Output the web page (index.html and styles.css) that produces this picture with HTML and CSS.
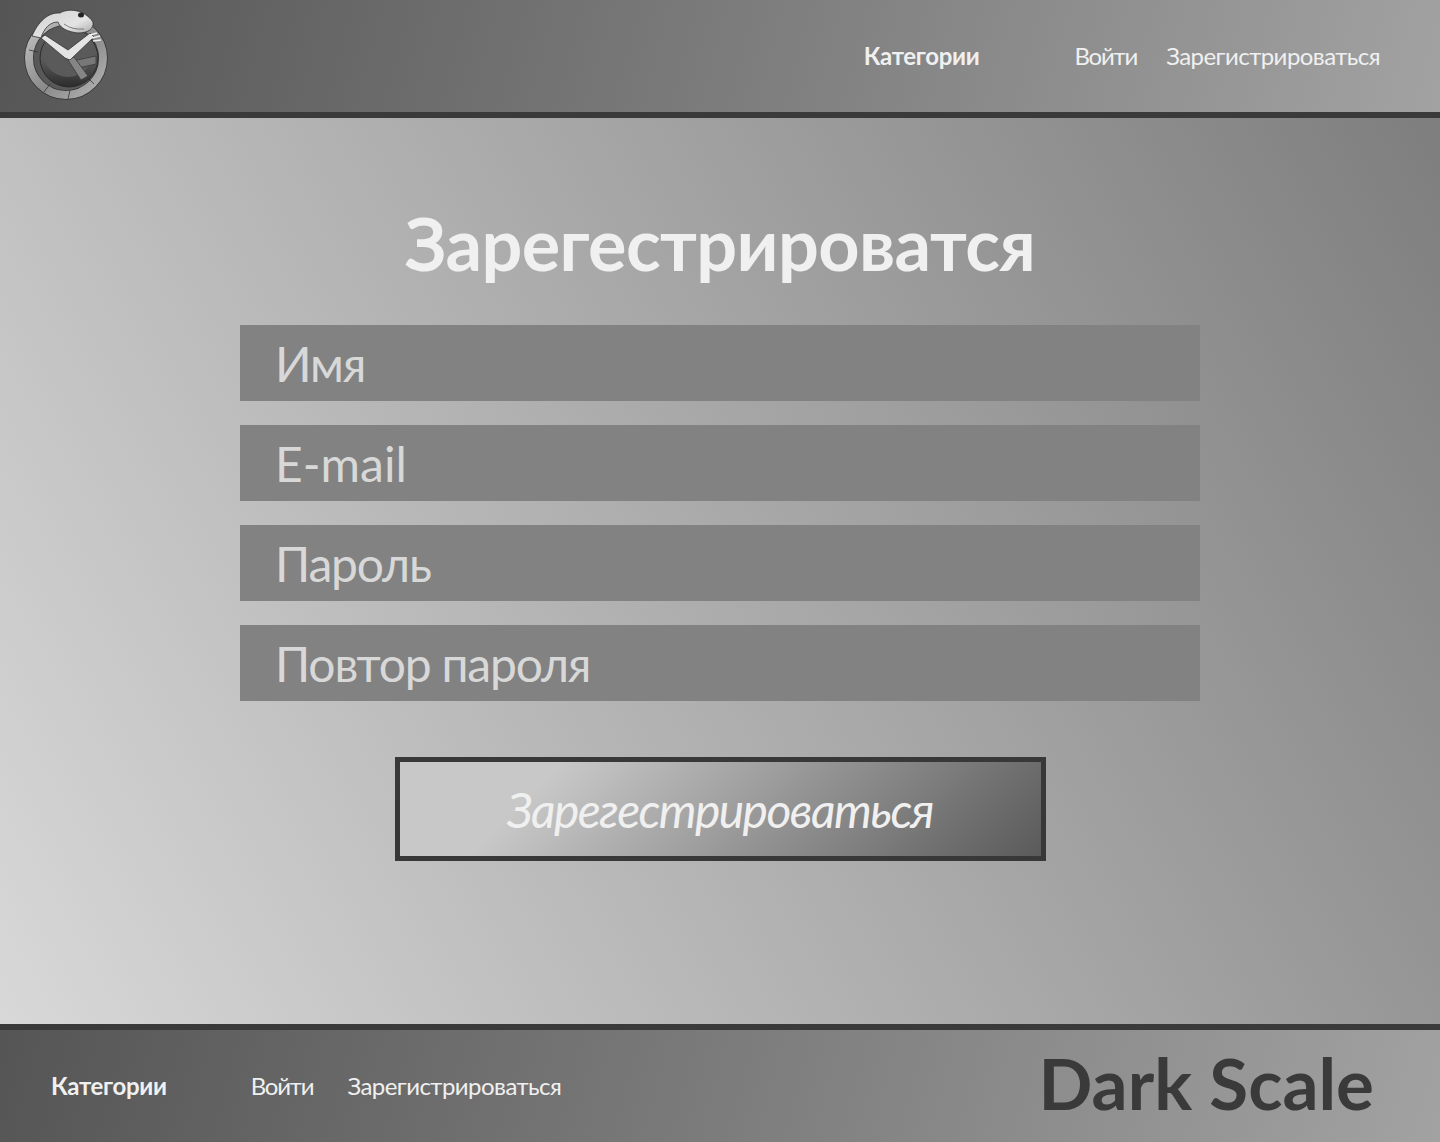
FILE: index.html
```html
<!DOCTYPE html>
<html lang="ru">
<head>
<meta charset="utf-8">
<title>Dark Scale</title>
<link rel="stylesheet" href="styles.css">
</head>
<body>
<header class="header">
  <svg class="logo" viewBox="22 8 90 96" width="90" height="96" aria-hidden="true">
    <defs>
      <linearGradient id="ring" x1="0" y1="0" x2="1" y2="1">
        <stop offset="0" stop-color="#c4c4c4"/><stop offset=".55" stop-color="#8a8a8a"/><stop offset="1" stop-color="#b4b4b4"/>
      </linearGradient>
      <linearGradient id="inner" x1="0" y1="0" x2="0" y2="1">
        <stop offset="0" stop-color="#5c5c5c"/><stop offset=".55" stop-color="#585858"/><stop offset="1" stop-color="#2c2c2c"/>
      </linearGradient>
      <linearGradient id="head" x1="0" y1="0" x2="1" y2="1">
        <stop offset="0" stop-color="#d0d0d0"/><stop offset=".6" stop-color="#e4e4e4"/><stop offset="1" stop-color="#9a9a9a"/>
      </linearGradient>
    </defs>
    <circle cx="66" cy="58" r="37" fill="none" stroke="#333" stroke-width="9.500"/>
    <circle cx="66" cy="58" r="37" fill="none" stroke="url(#ring)" stroke-width="8"/>
    <circle cx="69" cy="58" r="29" fill="url(#inner)" stroke="#2a2a2a"/>
    <circle cx="68" cy="52" r="25" fill="#5a5a5a"/>
    <path d="M72 61 L96 56 L96 64 L78 68 Z" fill="#777" stroke="#3a3a3a" stroke-width=".8"/>
    <path d="M68 60 L74 57 L88 76 L81 80 Z" fill="#858585" stroke="#3a3a3a" stroke-width=".8"/>
    <path d="M41 38 L45 35 L68 50 L90 33 L94 37 L70 60 L65 58 Z" fill="#e4e4e4" stroke="#333" stroke-width=".8"/>
    <path d="M32 36 C38 22 48 12 60 13 C68 8 84 9 93 22 C94 29 88 33 78 33 C68 32 60 28 58 22 C50 22 44 28 41 38 Z" fill="url(#head)" stroke="#333" stroke-width=".8"/>
    <ellipse cx="81" cy="15" rx="3" ry="2.500" fill="#222"/>
    <path d="M64 24 Q72 30 84 29" fill="none" stroke="#666" stroke-width=".8"/>
    <path d="M90 35 L97 33 M92 38 L100 36 M93 41 L101 40" stroke="#eee" stroke-width="1.500" fill="none"/>
    <path d="M29 50 L38 52 M44 92 L50 84 M68 99 L70 90 M94 84 L87 77" stroke="#333" stroke-width=".8"/>
  </svg>
  <nav class="nav nav-top">
    <a class="nav-strong">Категории</a>
    <a class="nav-login">Войти</a>
    <a class="nav-reg">Зарегистрироваться</a>
  </nav>
</header>
<main class="main">
  <h1 class="title">Зарегестрироватся</h1>
  <form class="form">
    <label class="field">Имя</label>
    <label class="field field-latin">E-mail</label>
    <label class="field">Пароль</label>
    <label class="field">Повтор пароля</label>
    <div class="submit">Зарегестрироваться</div>
  </form>
</main>
<footer class="footer">
  <nav class="nav nav-bottom">
    <a class="nav-strong">Категории</a>
    <a class="nav-login">Войти</a>
    <a class="nav-reg">Зарегистрироваться</a>
  </nav>
  <div class="brand">Dark Scale</div>
</footer>
</body>
</html>
```
FILE: styles.css
```css
* { box-sizing: border-box; }
html, body { margin: 0; }
body {
  width: 1440px;
  height: 1142px;
  display: flex;
  flex-direction: column;
  font-family: Lato, "Noto Sans", "Liberation Sans", sans-serif;
  color: #f0f0f0;
  overflow: hidden;
}
.header, .footer {
  display: flex;
  align-items: center;
  background: linear-gradient(105deg, #555 0%, #a2a2a2 100%);
}
.header {
  height: 118px;
  border-bottom: 6px solid #3a3a3a;
  justify-content: space-between;
  padding: 0 60px 0 22px;
}
.logo { display: block; }
.nav { display: flex; font-size: 24px; padding-bottom: 2px; }
.nav-strong { font-weight: 700; letter-spacing: -0.3px; }
.nav-login { letter-spacing: -1.2px; }
.nav-reg { letter-spacing: -0.55px; }
.nav-top .nav-strong { margin-right: 95px; }
.nav-top .nav-login { margin-right: 29px; }
.nav-bottom .nav-strong { margin-right: 84px; }
.nav-bottom .nav-login { margin-right: 34px; }
.main {
  height: 906px;
  padding-top: 84px;
  background: linear-gradient(60deg, #d8d8d8 0%, #7e7e7e 100%);
}
.title {
  margin: 0 0 40px;
  height: 83px;
  line-height: 83px;
  font-size: 72px;
  font-weight: 700;
  letter-spacing: -0.6px;
  text-align: center;
}
.form {
  width: 960px;
  margin: 0 auto;
  display: flex;
  flex-direction: column;
  gap: 24px;
  align-items: center;
}
.field {
  display: block;
  width: 100%;
  height: 76px;
  line-height: 77px;
  padding-left: 35px;
  background: #828282;
  color: #d8d8d8;
  font-size: 48px;
  letter-spacing: -1.2px;
}
.field-latin { letter-spacing: 0; }
.submit {
  width: 651px;
  height: 104px;
  margin-top: 32px;
  line-height: 95px;
  border: 5px solid #383838;
  background: linear-gradient(135deg, #c8c8c8 22%, #5a5a5a 100%);
  font-size: 48px;
  font-style: italic;
  letter-spacing: -1.55px;
  text-align: center;
}
.footer {
  flex: 1;
  border-top: 6px solid #3a3a3a;
  justify-content: space-between;
  padding: 0 66px 0 51px;
}
.brand {
  color: #3a3a3a;
  font-size: 71px;
  font-weight: 700;
  line-height: 1;
  padding-bottom: 7px;
}
```
